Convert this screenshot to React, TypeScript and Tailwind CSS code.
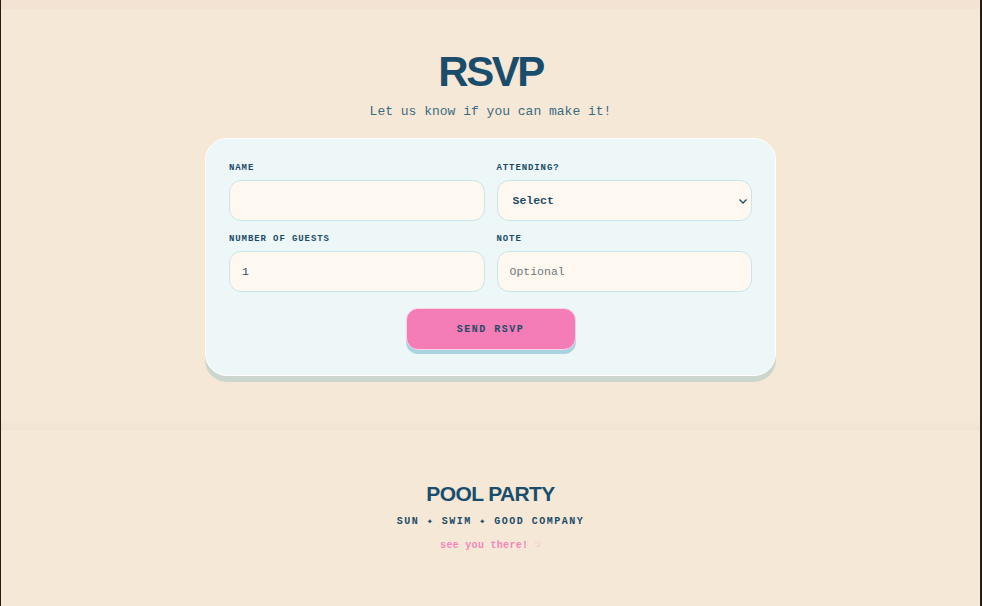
import React, { useState } from 'react';

// RSVP page + pool party footer

const Label: React.FC<{ children: React.ReactNode }> = ({ children }) => (
  <label className="block mb-[7px] font-['Liberation_Mono','Courier_New',monospace] text-[9px] font-bold uppercase leading-none tracking-[0.1em] text-[#1c4b68]">
    {children}
  </label>
);

const inputCls =
  "w-full h-[41px] rounded-[12px] border border-[#c8e5ea] bg-[#fff8f0] px-[12px] font-['Liberation_Mono','Courier_New',monospace] text-[11.5px] text-[#1c4b68] outline-none placeholder:text-[#6f7a7c]";

export default function App() {
  const [name, setName] = useState('');
  const [guests, setGuests] = useState('1');
  const [note, setNote] = useState('');

  return (
    <div className="min-h-[606px] bg-[#f5e8d7] border-l border-r-2 border-[#231d18] flex flex-col">
      <div className="h-[9px] bg-[#f2e3d3]" />

      <section className="flex flex-col items-center pt-[42px] pb-[44px]">
        <h1 className="font-['Liberation_Sans',Arial,sans-serif] text-[42px] leading-none font-bold tracking-[-0.06em] text-[#1a4d6c]">
          RSVP
        </h1>
        <p className="mt-[12px] font-['Liberation_Mono','Courier_New',monospace] text-[13px] leading-none text-[#3c6a7e]">
          Let us know if you can make it!
        </p>

        <form
          onSubmit={e => e.preventDefault()}
          className="mt-[20px] w-[571px] rounded-[22px] border border-white bg-[#edf7f8] px-[23px] pt-[25px] pb-[25px] shadow-[0_6px_0_#cdd6cc]"
        >
          <div className="grid grid-cols-2 gap-x-[12px] gap-y-[14px]">
            <div>
              <Label>Name</Label>
              <input className={inputCls} value={name} onChange={e => setName(e.target.value)} />
            </div>
            <div>
              <Label>Attending?</Label>
              <div className="relative">
                <select className={inputCls + ' appearance-none pl-[15px] font-bold'} defaultValue="">
                  <option value="">Select</option>
                  <option value="yes">Yes</option>
                  <option value="no">No</option>
                </select>
                <svg
                  className="absolute right-[4px] top-1/2 -translate-y-1/2 pointer-events-none"
                  width="10"
                  height="10"
                  viewBox="0 0 10 10"
                  fill="none"
                  stroke="#1c4b68"
                  strokeWidth="1.3"
                >
                  <path d="M1.5 3.5 L5 7 L8.5 3.5" />
                </svg>
              </div>
            </div>
            <div>
              <Label>Number of guests</Label>
              <input className={inputCls} value={guests} onChange={e => setGuests(e.target.value)} />
            </div>
            <div>
              <Label>Note</Label>
              <input className={inputCls} placeholder="Optional" value={note} onChange={e => setNote(e.target.value)} />
            </div>
          </div>

          <div className="flex justify-center mt-[16px]">
            <button
              type="submit"
              className="w-[170px] h-[42px] rounded-[12px] border border-[#fbd3e6] bg-[#f47db7] font-['Liberation_Mono','Courier_New',monospace] text-[10px] font-bold uppercase tracking-[0.15em] text-[#1f4a68] shadow-[0_4px_0_#a9d3df]"
            >
              Send RSVP
            </button>
          </div>
        </form>
      </section>

      <div className="h-[10px] bg-gradient-to-b from-[#f5e8d7] to-[#f1e2d1]" />

      <footer className="flex flex-col items-center pt-[53px] pb-[54px]">
        <h2 className="font-['Liberation_Sans',Arial,sans-serif] text-[21px] leading-none font-bold tracking-[-0.03em] text-[#1a4d6c]">
          POOL PARTY
        </h2>
        <p className="mt-[13px] font-['Liberation_Mono','Courier_New',monospace] text-[10px] leading-none font-bold tracking-[0.15em] text-[#1c4b68]">
          SUN ✦ SWIM ✦ GOOD COMPANY
        </p>
        <p className="mt-[14px] font-['Liberation_Mono','Courier_New',monospace] text-[10px] leading-none font-bold tracking-[0.03em] text-[#f586bd]">
          see you there! ♡
        </p>
      </footer>
    </div>
  );
}
